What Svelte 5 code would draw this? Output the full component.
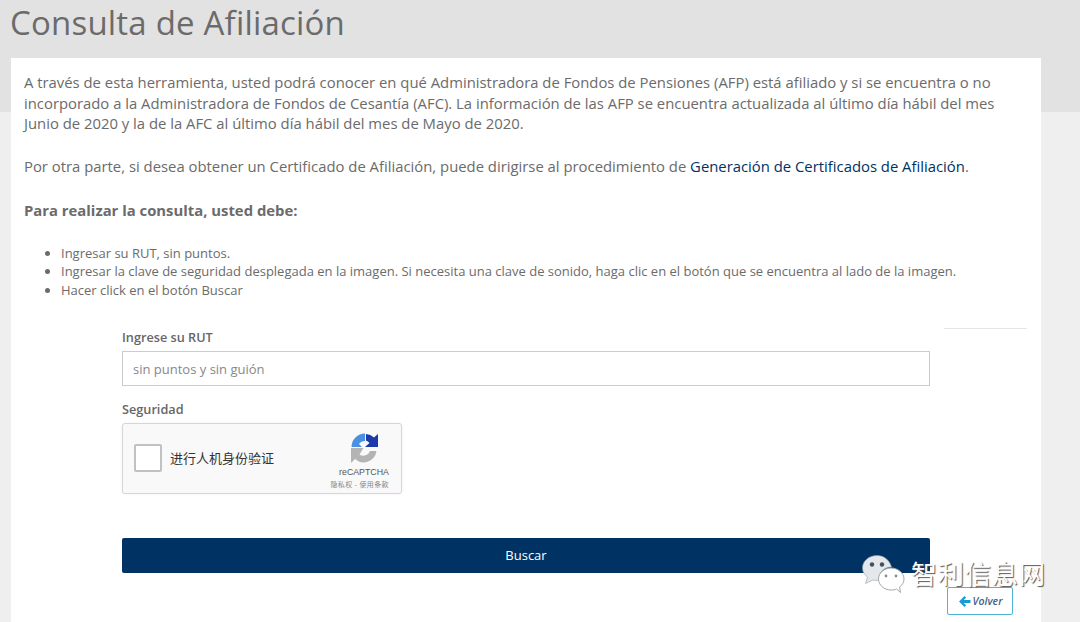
<script>
  const steps = [
    'Ingresar su RUT, sin puntos.',
    'Ingresar la clave de seguridad desplegada en la imagen. Si necesita una clave de sonido, haga clic en el botón que se encuentra al lado de la imagen.',
    'Hacer click en el botón Buscar'
  ];
</script>

<div class="page">
  <header class="head">
    <h1>Consulta de Afiliación</h1>
  </header>
  <main class="card">
    <p class="intro">A través de esta herramienta, usted podrá conocer en qué Administradora de Fondos de Pensiones (AFP) está afiliado y si se encuentra o no incorporado a la Administradora de Fondos de Cesantía (AFC). La información de las AFP se encuentra actualizada al último día hábil del mes Junio de 2020 y la de la AFC al último día hábil del mes de Mayo de 2020.</p>
    <p class="second">Por otra parte, si desea obtener un Certificado de Afiliación, puede dirigirse al procedimiento de <a href="#cert">Generación de Certificados de Afiliación</a>.</p>
    <p class="must">Para realizar la consulta, usted debe:</p>
    <ul>
      {#each steps as s}<li>{s}</li>{/each}
    </ul>
    <div class="rule-row"><span class="rule"></span></div>
    <form class="form">
      <label class="lbl" for="rut">Ingrese su RUT</label>
      <input id="rut" type="text" placeholder="sin puntos y sin guión" />
      <div class="lbl sec">Seguridad</div>
      <div class="captcha">
        <span class="check"></span>
        <span class="cap-text">进行人机身份验证</span>
        <div class="cap-logo">
          <svg viewBox="0 0 27 31">
            <path d="M.5 14 A13.500 13.500 0 0 1 14 .5 L14 8 A7 7 0 0 0 8 11 L11 14 Z" fill="#4a90e2"/>
            <path d="M15 1 A13 13 0 0 1 23 4.500 L27 1 L27 14 L14 14 L18.500 10 A7 7 0 0 0 15 7.500 Z" fill="#1c3aa9"/>
            <path d="M0 15 L0 30 L4 26 A13 13 0 0 0 25.500 18 L19 18 A7 7 0 0 1 8.500 21.500 L12.500 15 Z" fill="#b4b4b4"/>
          </svg>
          <span class="re">reCAPTCHA</span>
          <span class="terms">隐私权 - 使用条款</span>
        </div>
      </div>
      <button type="button" class="buscar">Buscar</button>
    </form>
    <div class="volver-row">
      <button type="button" class="volver">
        <svg width="13" height="13" viewBox="0 0 12 12"><path d="M6 1 L1 6 L6 11 L7.500 9.500 L5.200 7.300 L11.500 7.300 L11.500 4.700 L5.200 4.700 L7.500 2.500 Z" fill="#1b9ad1"/></svg>
        <span>Volver</span>
      </button>
    </div>
  </main>
  <div class="mark">
    <svg width="44" height="40" viewBox="0 0 44 40">
      <path d="M15 1.500 C7 1.500 .5 7 .5 14 C.5 18 2.500 21 5.500 23 L3.500 29.500 L11 26 C13 26.500 15 26.500 17 26 C16 19 22 13 29.500 13 C27.500 6 22 1.500 15 1.500 Z" fill="#e4e7ec" stroke="#9a9da3" stroke-width=".6"/>
      <circle cx="10" cy="10.500" r="2.200" fill="#44505f"/>
      <circle cx="20" cy="10.500" r="2.200" fill="#44505f"/>
      <path d="M29 14 C22 14 16.500 19 16.500 25 C16.500 31 22 36 29 36 C31 36 33 36 34.500 35 L38.500 38.500 L37.500 33 C40.500 31 42 28 42 25 C42 19 36 14 29 14 Z" fill="#fff" stroke="#a4a7ac" stroke-width="1"/>
      <circle cx="24" cy="22" r="1.400" fill="#8a8d92"/>
      <circle cx="34" cy="22" r="1.400" fill="#8a8d92"/>
    </svg>
    <span class="mark-text">智利信息网</span>
  </div>
</div>

<style>
  :global(body) {
    margin: 0;
    background: #efefef;
  }
  .page {
    position: relative;
    height: 622px;
    overflow: hidden;
    font-family: "Open Sans", sans-serif;
    color: #6b6b6b;
  }
  .head {
    height: 112px;
    background: #e2e2e2;
    padding-left: 10px;
    box-sizing: border-box;
  }
  h1 {
    margin: 0;
    font-size: 33px;
    font-weight: 400;
    line-height: 46px;
    letter-spacing: .2px;
    color: #6b6b6b;
  }
  .card {
    position: relative;
    margin: -54px 39px 0 11px;
    height: 564px;
    background: #fff;
    box-sizing: border-box;
    padding: 14px 13px 0;
  }
  p { margin: 0; }
  .intro {
    font-size: 14.85px;
    line-height: 20.500px;
    width: 985px;
  }
  .second {
    font-size: 14.85px;
    line-height: 20px;
    margin-top: 22px;
  }
  a { color: #003264; text-decoration: none; }
  .must {
    font-size: 14.85px;
    font-weight: 700;
    line-height: 20px;
    margin-top: 24px;
  }
  ul {
    margin: 24px 0 0;
    padding-left: 37px;
    font-size: 13px;
    line-height: 18.500px;
  }
  .rule-row {
    display: flex;
    justify-content: flex-end;
    margin-top: 29px;
    margin-right: 1px;
  }
  .rule {
    width: 83px;
    height: 1px;
    background: #e6e6e6;
  }
  .form {
    display: flex;
    flex-direction: column;
    margin: 0 0 0 98px;
    width: 808px;
  }
  .lbl {
    font-size: 12.7px;
    font-weight: 600;
    line-height: 17px;
    margin-top: 0;
    color: #666;
  }
  .sec { margin-top: 15px; }
  #rut {
    margin-top: 5px;
    height: 35px;
    box-sizing: border-box;
    border: 1px solid #ccc;
    padding: 0 10px;
    font: 13px "Open Sans", sans-serif;
    outline: none;
    color: #666;
  }
  #rut::placeholder { color: #888; opacity: 1; }
  .captcha {
    margin-top: 5px;
    width: 278px;
    height: 69px;
    border: 1px solid #d6d6d6;
    border-radius: 3px;
    background: #f9f9f9;
    display: flex;
    align-items: center;
    box-shadow: 0 0 3px rgba(0,0,0,.06);
  }
  .check {
    width: 24px;
    height: 24px;
    margin-left: 11px;
    margin-top: -1px;
    border: 2px solid #c1c1c1;
    border-radius: 2px;
    background: #fff;
  }
  .cap-text {
    margin-left: 8px;
    font: 13px "Noto Sans CJK SC", sans-serif;
    color: #333;
    margin-top: -3px;
  }
  .cap-logo {
    margin-left: auto;
    align-self: flex-start;
    width: 74px;
    display: flex;
    flex-direction: column;
    align-items: center;
    font-family: "Liberation Sans", sans-serif;
    color: #555;
  }
  .cap-logo svg { width: 27px; height: 31px; margin-top: 9px; }
  .re { font-size: 8.800px; line-height: 12px; margin-top: 2px; }
  .terms {
    align-self: flex-end;
    margin-right: 12px;
    font: 7px "Noto Sans CJK SC", sans-serif;
    line-height: 12px;
    letter-spacing: .4px;
    color: #888;
    white-space: nowrap;
  }
  .buscar {
    margin-top: 44px;
    height: 35px;
    padding: 0 0 2px;
    border: 0;
    border-radius: 2px;
    background: #003264;
    color: #fff;
    font: 13px "Open Sans", sans-serif;
  }
  .volver-row {
    display: flex;
    justify-content: flex-end;
    margin-top: 14px;
    padding-right: 15px;
  }
  .volver {
    width: 66px;
    height: 28px;
    padding: 0;
    background: #fff;
    border: 1px solid #4fb3d9;
    border-radius: 2px;
    display: flex;
    align-items: center;
    justify-content: center;
    gap: 2px;
    font: italic 600 10.500px "Open Sans", sans-serif;
    color: #44628a;
  }
  .mark {
    position: absolute;
    left: 862px;
    top: 554px;
    display: flex;
    align-items: center;
    gap: 5px;
  }
  .mark-text {
    font: 400 26px "Noto Sans CJK SC", sans-serif;
    line-height: 38px;
    color: #fff;
    letter-spacing: 1px;
    text-shadow: 1px 1px 1px #555;
    margin-top: -2px;
  }
</style>
